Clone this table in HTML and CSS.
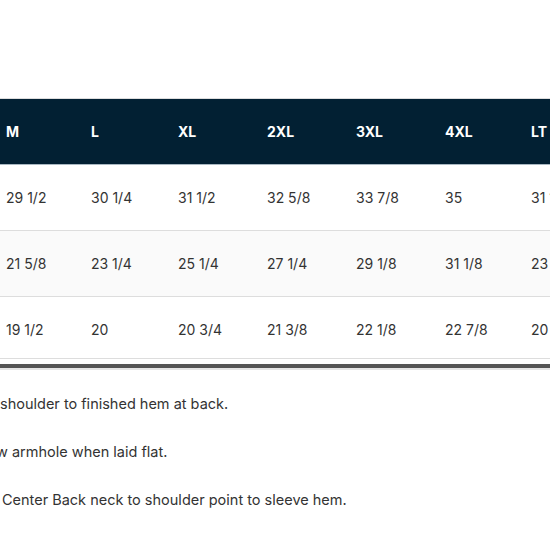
FILE: index.html
```html
<!DOCTYPE html>
<html lang="en">

<head>
    <meta charset="UTF-8">
    <meta name="viewport" content="width=device-width, initial-scale=1.0">
    <title>Size Chart</title>
    <link rel="stylesheet" href="styles.css">
</head>

<body>

    <div class="size-chart">
        <div class="table-wrap">
            <table class="size-table">
                <thead>
                    <tr>
                        <th>M</th>
                        <th>L</th>
                        <th>XL</th>
                        <th>2XL</th>
                        <th>3XL</th>
                        <th>4XL</th>
                        <th>LT</th>
                    </tr>
                </thead>
                <tbody>
                    <tr>
                        <td>29 1/2</td>
                        <td>30 1/4</td>
                        <td>31 1/2</td>
                        <td>32 5/8</td>
                        <td>33 7/8</td>
                        <td>35</td>
                        <td>31 1/2</td>
                    </tr>
                    <tr class="alt">
                        <td>21 5/8</td>
                        <td>23 1/4</td>
                        <td>25 1/4</td>
                        <td>27 1/4</td>
                        <td>29 1/8</td>
                        <td>31 1/8</td>
                        <td>23 1/4</td>
                    </tr>
                    <tr class="last">
                        <td>19 1/2</td>
                        <td>20</td>
                        <td>20 3/4</td>
                        <td>21 3/8</td>
                        <td>22 1/8</td>
                        <td>22 7/8</td>
                        <td>20 3/4</td>
                    </tr>
                </tbody>
            </table>
        </div>

        <!-- Notas de medidas -->
        <div class="notes">
            <p>shoulder to finished hem at back.</p>
            <p><span class="cut">w</span> armhole when laid flat.</p>
            <p class="indent">Center Back neck to shoulder point to sleeve hem.</p>
        </div>
    </div>

</body>

</html>
```

FILE: styles.css
```css
body {
    font-family: 'Inter', 'Liberation Sans', sans-serif;
    background: #ffffff;
    color: #333333;
    margin: 0;
    padding: 0;
    overflow: hidden;
}

.size-chart {
    padding-top: 98px;
    overflow: hidden;
}

.table-wrap {
    width: 620px;
    padding-bottom: 5px;
    border-bottom: 4px solid #555555;
    box-shadow: 0 2px 0 #e6e6e6;
}

.size-table {
    border-collapse: collapse;
    table-layout: fixed;
    width: 620px;
    border-top: 1px solid #dddddd;
}

.size-table th,
.size-table td {
    text-align: left;
    padding: 0 0 0 6px;
    white-space: nowrap;
}

.size-table th:nth-child(1),
.size-table td:nth-child(1) { width: 79px; }
.size-table th:nth-child(2),
.size-table td:nth-child(2) { width: 81px; }
.size-table th:nth-child(3),
.size-table td:nth-child(3) { width: 83px; }
.size-table th:nth-child(4),
.size-table td:nth-child(4) { width: 83px; }
.size-table th:nth-child(5),
.size-table td:nth-child(5) { width: 83px; }
.size-table th:nth-child(6),
.size-table td:nth-child(6) { width: 80px; }

.size-table thead th {
    background-color: #022033;
    color: #ffffff;
    font-size: 14px;
    font-weight: 700;
    height: 65px;
    border-bottom: 1px solid #a9b8c2;
}

.size-table tbody td {
    font-size: 14px;
    height: 65px;
    border-bottom: 1px solid #dddddd;
}

.size-table tbody tr.alt td {
    background-color: #fafafa;
}

.size-table tbody tr.last td {
    height: 57px;
    padding-top: 4px;
}

/* Notas */
.notes {
    padding-top: 27px;
}

.notes p {
    margin: 0 0 30px 0;
    font-size: 14.5px;
    line-height: 18px;
    white-space: nowrap;
}

.notes p.indent {
    padding-left: 2px;
}

.cut {
    margin-left: -4px;
}
```
